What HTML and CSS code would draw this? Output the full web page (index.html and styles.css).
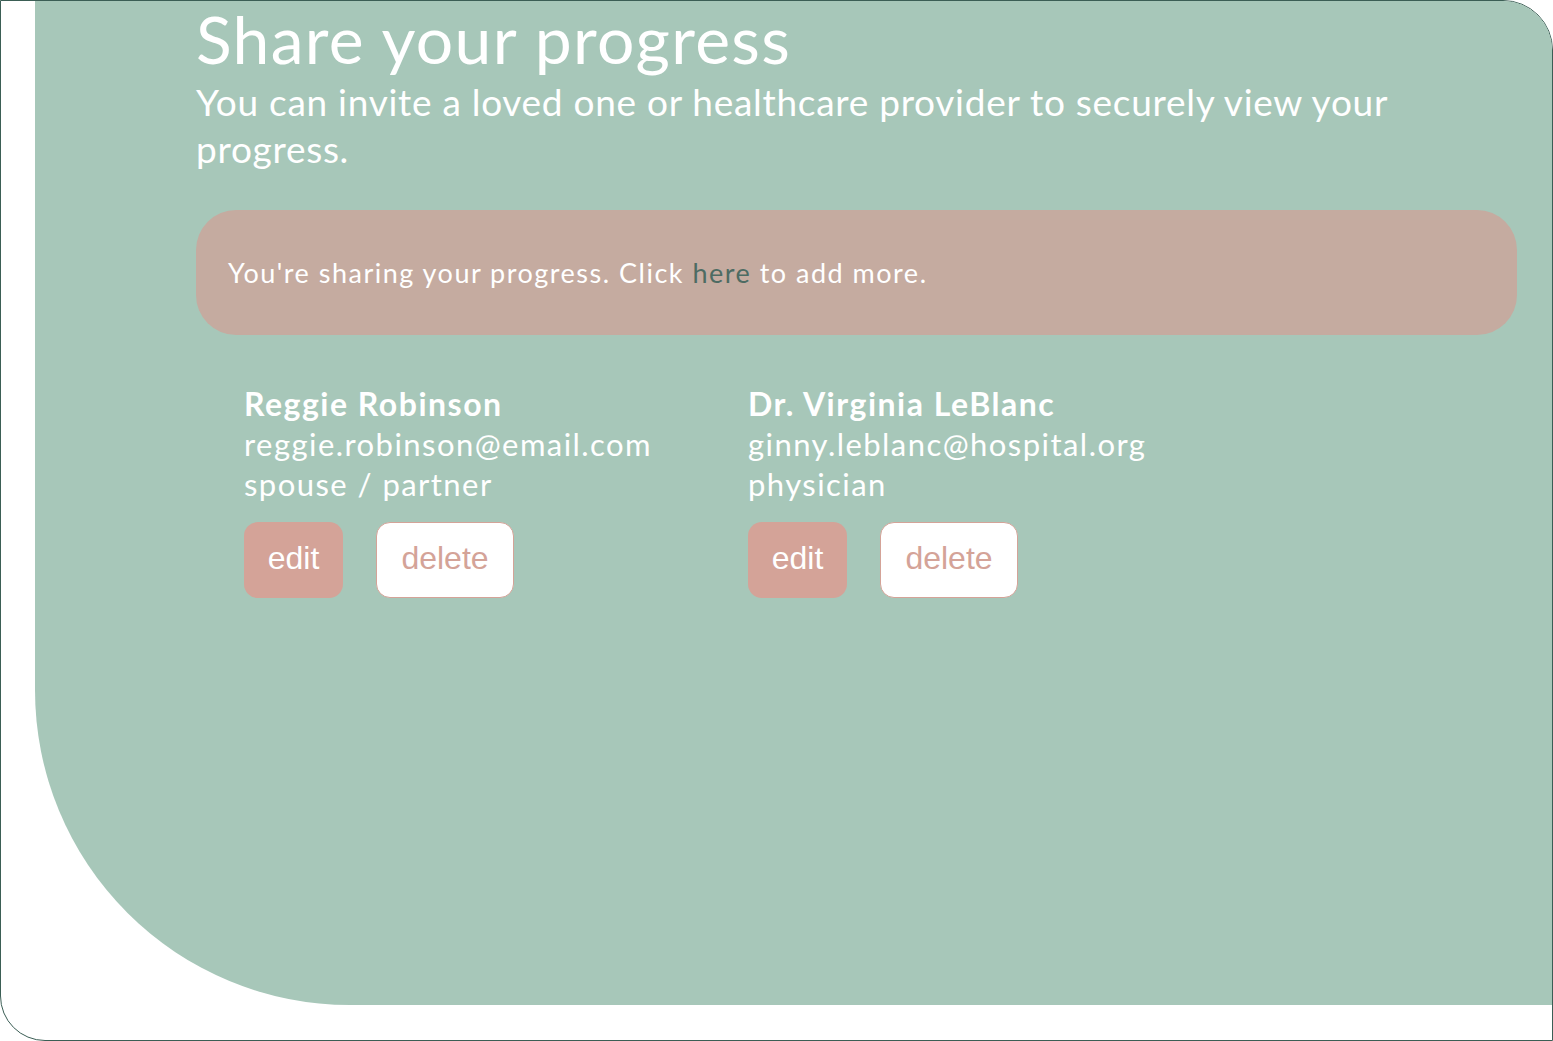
FILE: index.html
```html
<!DOCTYPE html>
<html>
<head>
<meta charset="utf-8">
<link rel="stylesheet" href="styles.css">
</head>
<body>
<div class="frame">
  <main class="panel">
    <h1 class="title">Share your progress</h1>
    <p class="subtitle">You can invite a loved one or healthcare provider to securely view your progress.</p>
    <div class="banner"><p class="banner-text">You're sharing your progress. Click <a class="link" href="#">here</a> to add more.</p></div>
    <div class="contacts">
      <div class="contact">
        <div class="name">Reggie Robinson</div>
        <div class="line">reggie.robinson@email.com</div>
        <div class="line">spouse / partner</div>
        <div class="actions">
          <button class="btn btn-edit">edit</button>
          <button class="btn btn-delete">delete</button>
        </div>
      </div>
      <div class="contact">
        <div class="name">Dr. Virginia LeBlanc</div>
        <div class="line">ginny.leblanc@hospital.org</div>
        <div class="line">physician</div>
        <div class="actions">
          <button class="btn btn-edit">edit</button>
          <button class="btn btn-delete">delete</button>
        </div>
      </div>
    </div>
  </main>
</div>
</body>
</html>
```
FILE: styles.css
```css
* { box-sizing: border-box; }
html, body { margin: 0; padding: 0; background: #ffffff; }
.frame {
  width: 1553px;
  height: 1041px;
  border: 1px solid #3b5e55;
  border-radius: 0 50px 0 45px;
  overflow: hidden;
  background: #ffffff;
  padding-left: 34px;
}
.panel {
  height: 1004px;
  background: #a7c7b9;
  border-radius: 0 0 0 315px;
  padding: 0 35px 0 161px;
  color: #ffffff;
  font-family: Lato, "Noto Sans", sans-serif;
}
.title {
  margin: 0;
  font-size: 66px;
  font-weight: 400;
  line-height: 75px;
  letter-spacing: 1.3px;
}
.subtitle {
  margin: 2px 0 0;
  max-width: 1250px;
  font-size: 37px;
  line-height: 47px;
  letter-spacing: 0.72px;
}
.banner {
  margin-top: 38px;
  height: 125px;
  background: #c5aba0;
  border-radius: 40px;
  display: flex;
  align-items: center;
  padding-left: 32px;
}
.banner-text {
  margin: 0;
  font-size: 27px;
  letter-spacing: 1.5px;
}
.link { color: #4d6b63; text-decoration: none; }
.contacts {
  display: grid;
  grid-template-columns: 504px 504px;
  padding-left: 48px;
  margin-top: 49px;
}
.name { font-size: 32px; font-weight: 700; line-height: 40px; letter-spacing: 1.5px; }
.line { font-size: 31px; line-height: 40px; letter-spacing: 1.45px; }
.actions { display: flex; gap: 33px; margin-top: 18px; }
.btn {
  height: 76px;
  border-radius: 14px;
  font-family: "Liberation Sans", Arial, sans-serif;
  font-size: 32px;
  padding: 0 0 3px;
}
.btn-edit { width: 99px; background: #d4a398; color: #ffffff; border: 0; }
.btn-delete { width: 138px; background: #ffffff; color: #d4a398; border: 1px solid #d4a398; }
```
